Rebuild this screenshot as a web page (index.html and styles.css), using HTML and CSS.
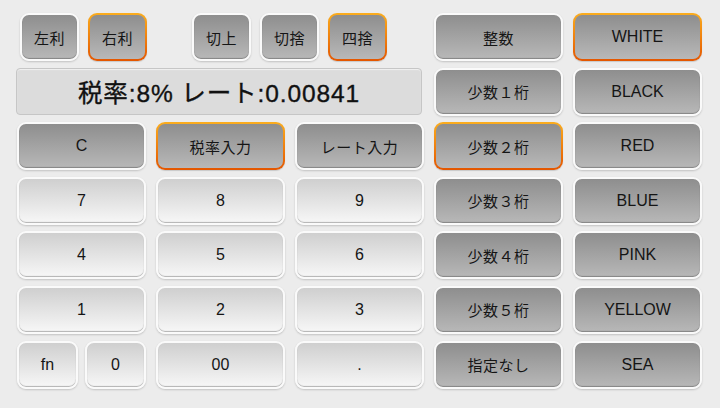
FILE: index.html
```html
<!DOCTYPE html>
<html lang="ja">
<head>
<meta charset="utf-8">
<link rel="stylesheet" href="styles.css">
</head>
<body>
<div class="pad">
  <div class="top span3">
    <div class="btn gray small">左利</div>
    <div class="btn gray small sel">右利</div>
    <div class="btn gray small push">切上</div>
    <div class="btn gray small">切捨</div>
    <div class="btn gray small sel">四捨</div>
  </div>
  <div class="btn gray">整数</div>
  <div class="btn gray sel latin">WHITE</div>

  <div class="display span3">税率:8% レート:0.00841</div>
  <div class="btn gray">少数１桁</div>
  <div class="btn gray latin">BLACK</div>

  <div class="btn gray latin">C</div>
  <div class="btn gray sel">税率入力</div>
  <div class="btn gray">レート入力</div>
  <div class="btn gray sel">少数２桁</div>
  <div class="btn gray latin">RED</div>

  <div class="btn light latin">7</div>
  <div class="btn light latin">8</div>
  <div class="btn light latin">9</div>
  <div class="btn gray">少数３桁</div>
  <div class="btn gray latin">BLUE</div>

  <div class="btn light latin">4</div>
  <div class="btn light latin">5</div>
  <div class="btn light latin">6</div>
  <div class="btn gray">少数４桁</div>
  <div class="btn gray latin">PINK</div>

  <div class="btn light latin">1</div>
  <div class="btn light latin">2</div>
  <div class="btn light latin">3</div>
  <div class="btn gray">少数５桁</div>
  <div class="btn gray latin">YELLOW</div>

  <div class="pair">
    <div class="btn light latin">fn</div>
    <div class="btn light latin">0</div>
  </div>
  <div class="btn light latin">00</div>
  <div class="btn light latin">.</div>
  <div class="btn gray">指定なし</div>
  <div class="btn gray latin">SEA</div>
</div>
</body>
</html>
```
FILE: styles.css
```css
html, body {
  margin: 0;
  padding: 0;
  background: #ececec;
  width: 720px;
  height: 408px;
  overflow: hidden;
}
body {
  font-family: "Liberation Sans", "Noto Sans CJK JP", sans-serif;
  color: #1e1e1e;
}
.pad {
  display: grid;
  grid-template-columns: repeat(5, 129px);
  grid-template-rows: repeat(7, 48px);
  column-gap: 10px;
  row-gap: 6.6px;
  padding: 13px 0 0 17px;
}
.span3 { grid-column: span 3; }
.top {
  display: flex;
  gap: 9px;
  padding-left: 3px;
}
.top .push { margin-left: 36px; }
.top .btn { width: 59px; }
.pair {
  display: flex;
  gap: 7px;
}
.pair .btn { flex: 1; }
.btn {
  box-sizing: border-box;
  display: flex;
  align-items: center;
  justify-content: center;
  border-radius: 9px;
  border: 2px solid #fafafa;
  font-family: "Noto Sans CJK JP", sans-serif;
  font-size: 15px;
  letter-spacing: 0.5px;
  color: #151515;
  box-shadow: 0 1px 2px rgba(0,0,0,0.18), inset 0 -1px 1px rgba(0,0,0,0.28);
}
.btn.latin {
  font-family: "Liberation Sans", "Noto Sans CJK JP", sans-serif;
  font-size: 16px;
  letter-spacing: 0;
}
.gray {
  background: linear-gradient(#8e8e8e, #b8b8b8);
}
.light {
  background: linear-gradient(#cfcfcf, #f7f7f7);
}
.gray.sel {
  border: 2px solid transparent;
  background:
    linear-gradient(#8e8e8e, #b8b8b8) padding-box,
    linear-gradient(#fbad1e, #e45600) border-box;
  box-shadow: 0 1px 1px rgba(0,0,0,0.15);
}
.display {
  box-sizing: border-box;
  height: 47px;
  margin-left: -1px;
  margin-right: 2px;
  background: #dcdcdc;
  border: 1px solid #c6c6c6;
  border-radius: 4px;
  display: flex;
  align-items: center;
  justify-content: center;
  font-family: "Liberation Sans", "Noto Sans CJK JP", sans-serif;
  font-size: 24.5px;
  letter-spacing: 0.9px;
  -webkit-text-stroke: 0.35px #111;
  color: #111;
  box-shadow: inset 0 1px 1px rgba(255,255,255,0.6);
}
```
